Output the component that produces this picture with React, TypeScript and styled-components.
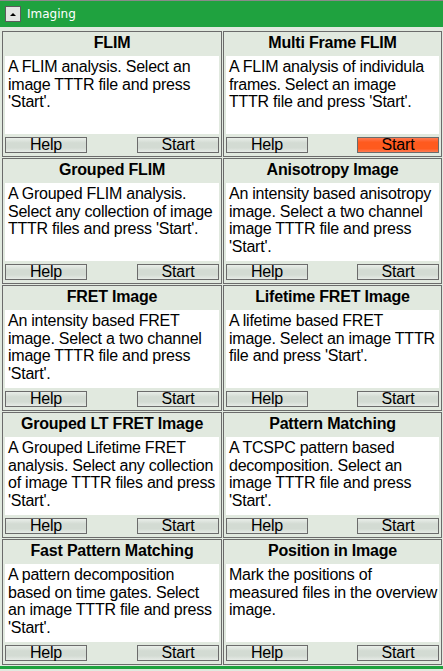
import styled, { createGlobalStyle } from "styled-components";

const GlobalStyle = createGlobalStyle`
    html, body {
        margin: 0;
        padding: 0;
        background-color: #e1e9df;
    }
    body {
        font-family: "Liberation Sans", Arial, sans-serif;
        width: 443px;
        height: 671px;
        overflow: hidden;
    }
`

interface I_Tool {
    title: string
    text: string
    active?: boolean
}

const tools: I_Tool[] = [
    { title: "FLIM", text: "A FLIM analysis. Select an image TTTR file and press 'Start'." },
    { title: "Multi Frame FLIM", text: "A FLIM analysis of individula frames. Select an image TTTR file and press 'Start'.", active: true },
    { title: "Grouped FLIM", text: "A Grouped FLIM analysis. Select any collection of image TTTR files and press 'Start'." },
    { title: "Anisotropy Image", text: "An intensity based anisotropy image. Select a two channel image TTTR file and press 'Start'." },
    { title: "FRET Image", text: "An intensity based FRET image. Select a two channel image TTTR file and press 'Start'." },
    { title: "Lifetime FRET Image", text: "A lifetime based FRET\nimage. Select an image TTTR file and press 'Start'." },
    { title: "Grouped LT FRET Image", text: "A Grouped Lifetime FRET analysis. Select any collection of image TTTR files and press 'Start'." },
    { title: "Pattern Matching", text: "A TCSPC pattern based decomposition. Select an image TTTR file and press 'Start'." },
    { title: "Fast Pattern Matching", text: "A pattern decomposition based on time gates. Select an image TTTR file and press 'Start'." },
    { title: "Position in Image", text: "Mark the positions of measured files in the overview image." },
]

const Page = styled.div`
    border-top: 1px solid #8a8a8a;
    display: flex;
    flex-direction: column;
`

const Header = styled.div`
    height: 26px;
    background-color: #1fa23f;
    display: flex;
    align-items: center;
    padding-left: 5px;
    gap: 6px;
`

const Collapse = styled.div`
    width: 14px;
    height: 14px;
    border: 1px solid #5c5c5c;
    background-color: #e3e6e3;
    display: flex;
    align-items: center;
    justify-content: center;
`

const Arrow = styled.div`
    width: 0;
    height: 0;
    border-left: 3px solid transparent;
    border-right: 3px solid transparent;
    border-bottom: 3px solid #000;
`

const HeaderTitle = styled.span`
    color: #fff;
    font-family: "DejaVu Sans", Tahoma, sans-serif;
    font-size: 12px;
`

const Grid = styled.div`
    display: grid;
    grid-template-columns: 220px 219px;
    gap: 1px;
    padding: 4px 0 0 2px;
`

const Card = styled.div`
    height: 124px;
    border: 1px solid #6b6b6b;
    display: flex;
    flex-direction: column;
`

const Title = styled.div`
    height: 24px;
    line-height: 22px;
    text-align: center;
    font-weight: 700;
    font-size: 16px;
    letter-spacing: -0.2px;
    color: #000;
`

const Body = styled.div`
    flex: 1;
    margin: 0 2px;
    padding: 2px 1px 2px 3px;
    background-color: #fff;
    font-size: 16px;
    line-height: 17.5px;
    letter-spacing: -0.24px;
    white-space: pre-line;
    color: #000;
`

const Actions = styled.div`
    display: flex;
    justify-content: space-between;
    padding: 3px 2px 3px 2px;
`

const Button = styled.div<{ $active?: boolean }>`
    width: 80px;
    height: 14px;
    border: 1px solid #6b6b6b;
    background: ${({ $active }) => $active
        ? "linear-gradient(#ff7a52 0%, #ff5a1e 30%, #ff5a1e 75%, #ff7a52 100%)"
        : "linear-gradient(#e9eee9 0%, #d3dbd3 35%, #d3dbd3 70%, #e6ebe6 100%)"};
    font-size: 16px;
    line-height: 14px;
    letter-spacing: -0.2px;
    text-align: center;
    color: #000;
    cursor: pointer;
`

const Footer = styled.div`
    margin-top: 1px;
    height: 3px;
    background-color: #1fa23f;
`

export default function App() {
    return (
        <Page>
            <GlobalStyle />
            <Header>
                <Collapse><Arrow /></Collapse>
                <HeaderTitle>Imaging</HeaderTitle>
            </Header>
            <Grid>
                {tools.map(t => (
                    <Card key={t.title}>
                        <Title>{t.title}</Title>
                        <Body>{t.text}</Body>
                        <Actions>
                            <Button>Help</Button>
                            <Button $active={t.active}>Start</Button>
                        </Actions>
                    </Card>
                ))}
            </Grid>
            <Footer />
        </Page>
    )
}
